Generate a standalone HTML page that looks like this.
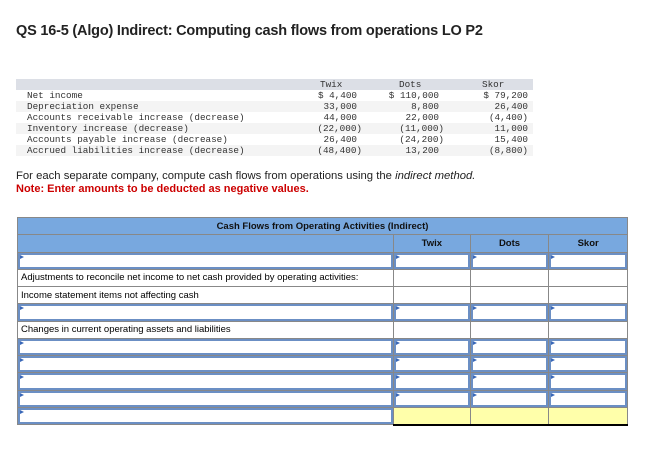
<!DOCTYPE html>
<html><head><style>
body{margin:0;width:654px;height:468px;background:#fff;position:relative;font-family:"Liberation Sans",sans-serif;overflow:hidden}
.t{position:absolute;left:16px;top:23px;font-size:14.5px;font-weight:bold;color:#222;letter-spacing:-0.2px}
.d{position:absolute;left:16px;top:79px;width:517px;font-family:"Liberation Mono",monospace;font-size:9.3px;color:#333}
.d div{height:11px;line-height:11px;position:relative}
.d div:nth-child(odd){background:#f4f4f4}
.d .h{background:#dcdfe6 !important}
.d span{position:absolute}
.l{left:11px}.a{right:176px;text-align:right}.b{right:94px}.c{right:5px}
.p{position:absolute;left:16px;top:170px;font-size:11.3px;color:#222}
.n{position:absolute;left:16px;top:183px;font-size:11px;color:#c00;font-weight:bold}
table{position:absolute;left:17px;top:217px;border-collapse:collapse;width:611px;font-size:9.5px;line-height:11px}
tr{height:17.25px}
td{border:1px solid #888;padding:0 3px;position:relative}
.hd td{background:#78a8df;font-weight:bold;color:#111;text-align:center}
.in{box-shadow:inset 0 0 0 2px #6b8fc4}
.in::before{content:"";position:absolute;left:2px;top:2px;border-left:4px solid #3a68b8;border-top:2px solid transparent;border-bottom:2px solid transparent}
.y{background:#ffffaa;border-bottom:2px solid #000}
</style></head><body>
<div class="t">QS 16-5 (Algo) Indirect: Computing cash flows from operations LO P2</div>
<div class="d">
<div class="h"><span class="l"></span><span style="left:304px">Twix</span><span style="left:383px">Dots</span><span style="left:466px">Skor</span></div>
<div><span class="l">Net income</span><span class="a">$ 4,400</span><span class="b">$ 110,000</span><span class="c">$ 79,200</span></div>
<div><span class="l">Depreciation expense</span><span class="a">33,000</span><span class="b">8,800</span><span class="c">26,400</span></div>
<div><span class="l">Accounts receivable increase (decrease)</span><span class="a">44,000</span><span class="b">22,000</span><span class="c">(4,400)</span></div>
<div><span class="l">Inventory increase (decrease)</span><span class="a" style="right:171px">(22,000)</span><span class="b" style="right:89px">(11,000)</span><span class="c">11,000</span></div>
<div><span class="l">Accounts payable increase (decrease)</span><span class="a">26,400</span><span class="b" style="right:89px">(24,200)</span><span class="c">15,400</span></div>
<div><span class="l">Accrued liabilities increase (decrease)</span><span class="a" style="right:171px">(48,400)</span><span class="b">13,200</span><span class="c">(8,800)</span></div>
</div>
<div class="p">For each separate company, compute cash flows from operations using the <i>indirect method.</i></div>
<div class="n">Note: Enter amounts to be deducted as negative values.</div>
<table>
<tr class="hd"><td colspan="4">Cash Flows from Operating Activities (Indirect)</td></tr>
<tr class="hd"><td style="width:369px"></td><td>Twix</td><td>Dots</td><td>Skor</td></tr>
<tr><td class="in"></td><td class="in"></td><td class="in"></td><td class="in"></td></tr>
<tr><td>Adjustments to reconcile net income to net cash provided by operating activities:</td><td></td><td></td><td></td></tr>
<tr><td>Income statement items not affecting cash</td><td></td><td></td><td></td></tr>
<tr><td class="in"></td><td class="in"></td><td class="in"></td><td class="in"></td></tr>
<tr><td>Changes in current operating assets and liabilities</td><td></td><td></td><td></td></tr>
<tr><td class="in"></td><td class="in"></td><td class="in"></td><td class="in"></td></tr>
<tr><td class="in"></td><td class="in"></td><td class="in"></td><td class="in"></td></tr>
<tr><td class="in"></td><td class="in"></td><td class="in"></td><td class="in"></td></tr>
<tr><td class="in"></td><td class="in"></td><td class="in"></td><td class="in"></td></tr>
<tr><td class="in"></td><td class="y"></td><td class="y"></td><td class="y"></td></tr>
</table>
</body></html>
